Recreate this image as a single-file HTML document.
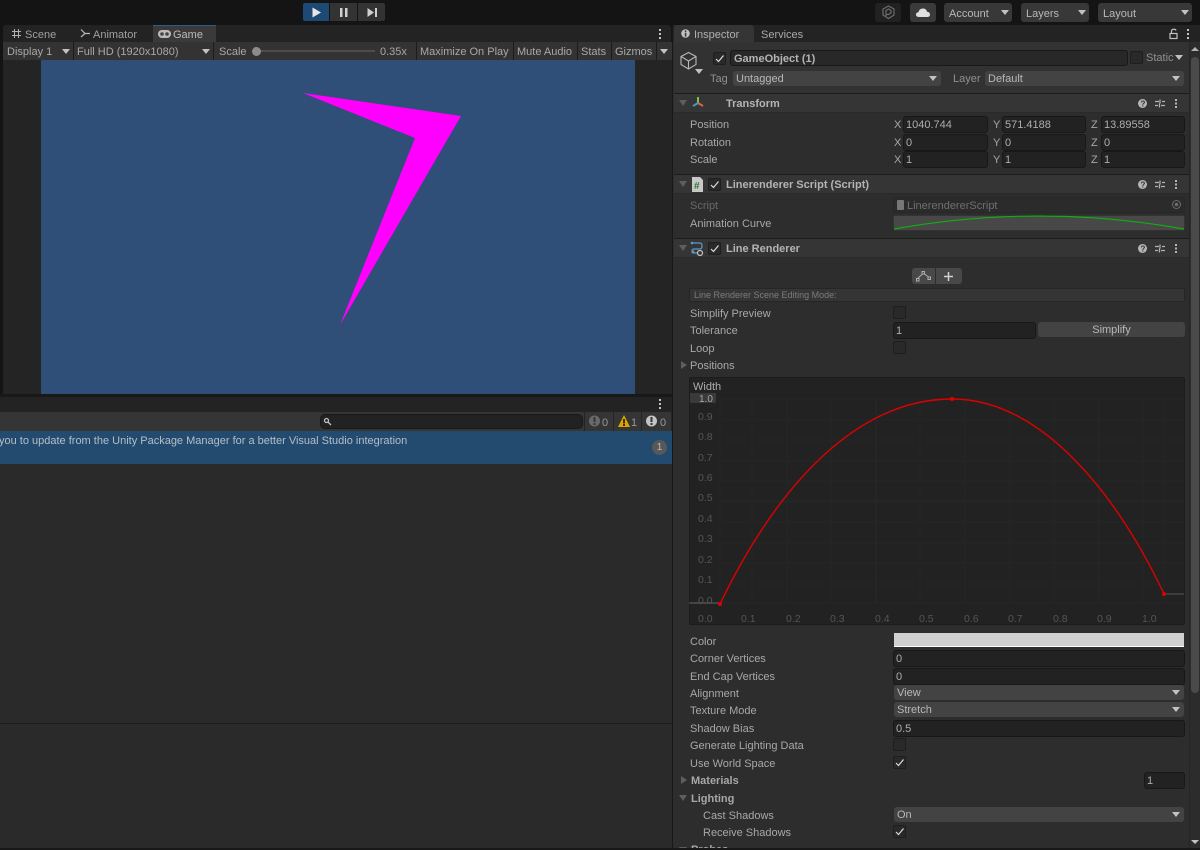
<!DOCTYPE html>
<html><head><meta charset="utf-8"><style>
html,body{margin:0;padding:0;background:#191919;}
#p{position:relative;width:1200px;height:850px;overflow:hidden;background:#141414;font:11px/14px "Liberation Sans",sans-serif;color:#a8a8a8;}
#p div,#p svg{position:absolute;}
.t{white-space:nowrap;}
.b{font-weight:bold;}
.f{background:#222;border:1px solid #181818;border-radius:3px;box-sizing:border-box;height:17px;padding-left:2px;line-height:17px;color:#aeaeae;white-space:nowrap;overflow:hidden;}
.d{background:#434343;border-radius:3px;height:15px;line-height:17px;padding-left:3px;box-sizing:border-box;color:#b8b8b8;white-space:nowrap;}
.c{width:13px;height:13px;background:#292929;border:1px solid #1e1e1e;border-radius:2px;box-sizing:border-box;}
.ar{width:0;height:0;border-left:4px solid transparent;border-right:4px solid transparent;border-top:5px solid #c2c2c2;}
.tr{width:0;height:0;border-left:4px solid transparent;border-right:4px solid transparent;border-top:6px solid #5e5e5e;}
.trr{width:0;height:0;border-top:4px solid transparent;border-bottom:4px solid transparent;border-left:6px solid #5e5e5e;}
.hd{left:674px;width:515px;height:19px;background:#353535;border-top:1px solid #1c1c1c;border-bottom:1px solid #2a2a2a;box-sizing:border-box;}
.g{color:#555;font-size:10.5px;}
.btn{background:#383838;top:3px;height:19px;border-radius:3px;}
.sep{top:42px;width:1px;height:18px;background:#1c1c1c;}
</style></head><body><div id="p">

<!-- top toolbar -->
<div style="left:303px;top:3px;width:26px;height:18px;background:#1d4a75;border-radius:2px 0 0 2px;"></div>
<div style="left:330px;top:3px;width:27px;height:18px;background:#333;"></div>
<div style="left:358px;top:3px;width:27px;height:18px;background:#333;border-radius:0 2px 2px 0;"></div>
<svg style="left:303px;top:3px" width="82" height="18"><path d="M9.500 4.500L18 9.500 9.500 14.500Z" fill="#e6e6e6"/><rect x="37" y="5" width="2.500" height="9" fill="#d0d0d0"/><rect x="42" y="5" width="2.500" height="9" fill="#d0d0d0"/><path d="M64.500 5L71 9.500 64.500 14Z" fill="#d0d0d0"/><rect x="72" y="5" width="2" height="9" fill="#d0d0d0"/></svg>
<div style="left:875px;top:3px;width:26px;height:19px;background:#212121;border-radius:3px;"></div>
<svg style="left:881px;top:5px" width="15" height="15" fill="none" stroke="#6c6c6c" stroke-width="1.200"><path d="M7.500 1L13 4V10L7.500 13.500 2 10V4ZM5 11V5.500L7.500 4 10 5.500V8L7.500 9.500H5"/></svg>
<div style="left:910px;top:3px;width:26px;height:19px;background:#3a3a3a;border-radius:3px;"></div>
<svg style="left:915px;top:6px" width="16" height="12"><path d="M4 11C1.500 11 1 9.500 1 8.500 1 7 2.200 6.200 3.500 6.300 3.800 4 5.500 2.500 8 2.500 10 2.500 11.700 3.800 12 5.700 13.800 5.800 15 7 15 8.500 15 10 14 11 12 11Z" fill="#e0e0e0"/></svg>
<div class="d btn" style="left:944px;width:68px;line-height:23px;padding-left:5px;">Account</div><div class="ar" style="left:1001px;top:10px;"></div>
<div class="d btn" style="left:1021px;width:68px;line-height:23px;padding-left:5px;">Layers</div><div class="ar" style="left:1078px;top:10px;"></div>
<div class="d btn" style="left:1098px;width:94px;line-height:23px;padding-left:5px;">Layout</div><div class="ar" style="left:1181px;top:10px;"></div>

<!-- game panel -->
<div style="left:3px;top:25px;width:668px;height:17px;background:#232323;border-radius:3px 3px 0 0;"></div>
<div style="left:153px;top:25px;width:63px;height:17px;background:#3a3a3a;border-top:1px solid #2c5d87;box-sizing:border-box;"></div>
<svg style="left:11px;top:28px" width="12" height="12" stroke="#b0b0b0" stroke-width="1"><path d="M1 3.500H10M1 7.500H10M3.500 1V10M7.500 1V10"/></svg>
<div class="t" style="left:25px;top:28px;color:#a0a0a0;">Scene</div>
<svg style="left:79px;top:28px" width="12" height="12" fill="none" stroke="#b8b8b8" stroke-width="1.200"><path d="M2 1.500L6 5.500 2 9M6 5.500H11"/></svg>
<div class="t" style="left:93px;top:28px;color:#a0a0a0;">Animator</div>
<svg style="left:158px;top:30px" width="13" height="8"><rect x="0" y="0" width="13" height="8" rx="4" fill="#bbb"/><circle cx="4" cy="4" r="1.800" fill="#444"/><circle cx="9" cy="4" r="1.800" fill="#444"/></svg>
<div class="t" style="left:173px;top:28px;color:#bcbcbc;">Game</div>
<svg style="left:658px;top:28px" width="4" height="12" fill="#c4c4c4"><rect x="1" y="1" width="2" height="2"/><rect x="1" y="5" width="2" height="2"/><rect x="1" y="9" width="2" height="2"/></svg>

<div style="left:3px;top:42px;width:670px;height:18px;background:#333;"></div>
<div class="t" style="left:7px;top:45px;">Display 1</div><div class="ar" style="left:62px;top:49px;"></div>
<div class="sep" style="left:73px"></div>
<div class="t" style="left:77px;top:45px;">Full HD (1920x1080)</div><div class="ar" style="left:202px;top:49px;"></div>
<div class="sep" style="left:213px"></div>
<div class="t" style="left:219px;top:45px;">Scale</div>
<div style="left:256px;top:50px;width:119px;height:2px;background:#4d4d4d;"></div>
<div style="left:252px;top:47px;width:9px;height:9px;border-radius:50%;background:#8c8c8c;"></div>
<div class="t" style="left:380px;top:45px;">0.35x</div>
<div class="sep" style="left:416px"></div>
<div class="t" style="left:420px;top:45px;">Maximize On Play</div>
<div class="sep" style="left:513px"></div>
<div class="t" style="left:517px;top:45px;">Mute Audio</div>
<div class="sep" style="left:577px"></div>
<div class="t" style="left:581px;top:45px;">Stats</div>
<div class="sep" style="left:611px"></div>
<div class="t" style="left:615px;top:45px;">Gizmos</div>
<div class="sep" style="left:656px"></div><div class="ar" style="left:660px;top:49px;"></div>

<div style="left:3px;top:60px;width:670px;height:334px;background:#242424;"></div>
<div style="left:41px;top:60px;width:594px;height:334px;background:#2f4e78;"></div>
<svg style="left:41px;top:60px" width="594" height="334"><path d="M262 33L420 56 299 265 374 78Z" fill="#ff00ff"/></svg>

<!-- console -->
<div style="left:0;top:394px;width:672px;height:3px;background:#181818;"></div>
<div style="left:0;top:397px;width:672px;height:15px;background:#232323;"></div>
<svg style="left:658px;top:398px" width="4" height="12" fill="#c4c4c4"><rect x="1" y="1" width="2" height="2"/><rect x="1" y="5" width="2" height="2"/><rect x="1" y="9" width="2" height="2"/></svg>
<div style="left:0;top:412px;width:672px;height:19px;background:#353535;"></div>
<div style="left:320px;top:414px;width:263px;height:15px;background:#222;border:1px solid #191919;border-radius:5px;box-sizing:border-box;"></div>
<svg style="left:323px;top:417px" width="9" height="9" fill="none" stroke="#c0c0c0" stroke-width="1.300"><circle cx="3.500" cy="3.500" r="2"/><path d="M5 5L8 8"/></svg>
<div style="left:584px;top:412px;width:1px;height:19px;background:#242424;"></div>
<div style="left:613px;top:412px;width:1px;height:19px;background:#242424;"></div>
<div style="left:641px;top:412px;width:1px;height:19px;background:#242424;"></div>
<div style="left:671px;top:412px;width:1px;height:19px;background:#242424;"></div>
<svg style="left:588px;top:414px" width="80" height="15"><circle cx="6.500" cy="7" r="5.500" fill="#6a6a6a"/><rect x="5.500" y="3" width="2" height="5" fill="#353535"/><rect x="5.500" y="9" width="2" height="2" fill="#353535"/><path d="M30 13L36 1 42 13Z" fill="#dfa400"/><rect x="35" y="5" width="2" height="4.500" fill="#3a3000"/><rect x="35" y="10" width="2" height="2" fill="#3a3000"/><circle cx="63.500" cy="7" r="5.500" fill="#c4c4c4"/><rect x="62.500" y="3" width="2" height="5" fill="#353535"/><rect x="62.500" y="9" width="2" height="2" fill="#353535"/></svg>
<div class="t" style="left:602px;top:416px;color:#999;">0</div>
<div class="t" style="left:631px;top:416px;color:#999;">1</div>
<div class="t" style="left:660px;top:416px;color:#999;">0</div>
<div style="left:0;top:431px;width:672px;height:33px;background:#234b6f;"></div>
<div class="t" style="left:-1px;top:434px;color:#b4bec7;">you to update from the Unity Package Manager for a better Visual Studio integration</div>
<div style="left:652px;top:440px;width:15px;height:15px;border-radius:50%;background:#585858;color:#bbb;text-align:center;line-height:15px;font-size:10px;">1</div>
<div style="left:0;top:464px;width:672px;height:386px;background:#2a2a2a;"></div>
<div style="left:0;top:723px;width:672px;height:1px;background:#1e1e1e;"></div>

<!-- inspector -->
<div style="left:672px;top:25px;width:1px;height:825px;background:#181818;"></div>
<div style="left:673px;top:25px;width:527px;height:17px;background:#232323;"></div>
<div style="left:674px;top:25px;width:80px;height:17px;background:#353535;border-radius:3px 3px 0 0;"></div>
<svg style="left:681px;top:29px" width="9" height="9"><circle cx="4.500" cy="4.500" r="4.300" fill="#c0c0c0"/><rect x="3.800" y="1.500" width="1.500" height="1.500" fill="#333"/><rect x="3.800" y="3.700" width="1.500" height="3.800" fill="#333"/></svg>
<div class="t" style="left:694px;top:28px;color:#b0b0b0;">Inspector</div>
<div class="t" style="left:761px;top:28px;color:#aaa;">Services</div>
<svg style="left:1168px;top:27px" width="11" height="13" fill="none" stroke="#c0c0c0" stroke-width="1.200"><rect x="2" y="6.500" width="7" height="5"/><path d="M3.500 6.500V4C3.500 2 7.500 1.500 8 3.500"/></svg>
<svg style="left:1186px;top:28px" width="4" height="12" fill="#c4c4c4"><rect x="1" y="1" width="2" height="2"/><rect x="1" y="5" width="2" height="2"/><rect x="1" y="9" width="2" height="2"/></svg>

<div style="left:673px;top:42px;width:527px;height:808px;background:#2d2d2d;"></div>
<div style="left:674px;top:42px;width:515px;height:51px;background:#323232;"></div>

<!-- scrollbar -->
<div style="left:1189px;top:42px;width:11px;height:808px;background:#2c2c2c;border-left:1px solid #262626;box-sizing:border-box;"></div>
<div style="left:1191px;top:57px;width:8px;height:636px;background:#4a4a4a;border-radius:4px;"></div>
<div class="ar" style="left:1191px;top:47px;border-top:0;border-bottom:4px solid #b0b0b0;"></div>
<div class="ar" style="left:1191px;top:840px;border-top-width:4px;"></div>

<!-- header -->
<svg style="left:679px;top:51px" width="20" height="20" fill="none" stroke="#b8b8b8" stroke-width="1.100"><path d="M9.500 1.500L17 5.500V13.500L9.500 18 2 13.500V5.500ZM2 5.500L9.500 10 17 5.500M9.500 10V18"/></svg>
<div class="ar" style="left:695px;top:69px;"></div>
<div class="c" style="left:713px;top:52px;"></div>
<svg style="left:715px;top:54px" width="10" height="9" fill="none" stroke="#dcdcdc" stroke-width="1.200"><path d="M1 5L3.500 7.500 8.500 1.500"/></svg>
<div class="f b" style="left:730px;top:50px;width:398px;height:16px;color:#b4b4b4;line-height:16px;padding-left:3px;background:#282828;">GameObject (1)</div>
<div class="c" style="left:1130px;top:51px;"></div>
<div class="t" style="left:1146px;top:51px;color:#909090;">Static</div>
<div class="ar" style="left:1175px;top:55px;"></div>
<div class="t" style="left:710px;top:72px;color:#909090;">Tag</div>
<div class="d" style="left:733px;top:71px;width:208px;">Untagged</div><div class="ar" style="left:929px;top:76px;"></div>
<div class="t" style="left:953px;top:72px;color:#909090;">Layer</div>
<div class="d" style="left:985px;top:71px;width:199px;">Default</div><div class="ar" style="left:1172px;top:76px;"></div>

<!-- Transform -->
<div class="hd" style="top:93px;height:20px;"></div>
<div class="tr" style="left:679px;top:100px;"></div>
<svg style="left:691px;top:96px" width="14" height="14" fill="none" stroke-width="2"><path d="M7 7V1" stroke="#7fc241"/><path d="M7 7L2 10" stroke="#3d9bd0"/><path d="M7 7L12 10" stroke="#d5683e"/></svg>
<div class="t b" style="left:726px;top:97px;color:#b4b4b4;">Transform</div>
<svg style="left:1137px;top:98px" width="45" height="11"><circle cx="5.500" cy="5.500" r="4.500" fill="#b4b4b4"/><text x="3.500" y="8.500" font-size="8" font-weight="bold" fill="#333" font-family="Liberation Sans">?</text><path d="M18 3.500H22M25 3.500H28M18 7.500H21M24 7.500H28M23 1.500V5.500M22.500 5.500V9.500" stroke="#b4b4b4" stroke-width="1.200" fill="none"/><rect x="38" y="1" width="2" height="2" fill="#b4b4b4"/><rect x="38" y="4.500" width="2" height="2" fill="#b4b4b4"/><rect x="38" y="8" width="2" height="2" fill="#b4b4b4"/></svg>

<div class="t" style="left:690px;top:118px;">Position</div>
<div class="t" style="left:690px;top:136px;">Rotation</div>
<div class="t" style="left:690px;top:153px;">Scale</div>
<div class="t" style="left:894px;top:118px;">X</div><div class="f" style="left:903px;top:116px;width:85px;">1040.744</div>
<div class="t" style="left:993px;top:118px;">Y</div><div class="f" style="left:1002px;top:116px;width:84px;">571.4188</div>
<div class="t" style="left:1091px;top:118px;">Z</div><div class="f" style="left:1101px;top:116px;width:84px;">13.89558</div>
<div class="t" style="left:894px;top:136px;">X</div><div class="f" style="left:903px;top:134px;width:85px;">0</div>
<div class="t" style="left:993px;top:136px;">Y</div><div class="f" style="left:1002px;top:134px;width:84px;">0</div>
<div class="t" style="left:1091px;top:136px;">Z</div><div class="f" style="left:1101px;top:134px;width:84px;">0</div>
<div class="t" style="left:894px;top:153px;">X</div><div class="f" style="left:903px;top:151px;width:85px;">1</div>
<div class="t" style="left:993px;top:153px;">Y</div><div class="f" style="left:1002px;top:151px;width:84px;">1</div>
<div class="t" style="left:1091px;top:153px;">Z</div><div class="f" style="left:1101px;top:151px;width:84px;">1</div>

<!-- Script -->
<div class="hd" style="top:174px;height:20px;"></div>
<div class="tr" style="left:679px;top:181px;"></div>
<svg style="left:691px;top:177px" width="13" height="15"><path d="M1 0H9L12 3V15H1Z" fill="#c8c8c8"/><text x="3" y="12" font-size="10" font-weight="bold" fill="#2b7a2b" font-family="Liberation Sans">#</text></svg>
<div class="c" style="left:708px;top:178px;"></div>
<svg style="left:710px;top:180px" width="10" height="9" fill="none" stroke="#dcdcdc" stroke-width="1.200"><path d="M1 5L3.500 7.500 8.500 1.500"/></svg>
<div class="t b" style="left:726px;top:178px;color:#b4b4b4;">Linerenderer Script (Script)</div>
<svg style="left:1137px;top:179px" width="45" height="11"><circle cx="5.500" cy="5.500" r="4.500" fill="#b4b4b4"/><text x="3.500" y="8.500" font-size="8" font-weight="bold" fill="#333" font-family="Liberation Sans">?</text><path d="M18 3.500H22M25 3.500H28M18 7.500H21M24 7.500H28M23 1.500V5.500M22.500 5.500V9.500" stroke="#b4b4b4" stroke-width="1.200" fill="none"/><rect x="38" y="1" width="2" height="2" fill="#b4b4b4"/><rect x="38" y="4.500" width="2" height="2" fill="#b4b4b4"/><rect x="38" y="8" width="2" height="2" fill="#b4b4b4"/></svg>
<div class="t" style="left:690px;top:199px;color:#696969;">Script</div>
<div style="left:893px;top:197px;width:292px;height:16px;background:#2b2b2b;border:1px solid #272727;border-radius:3px;box-sizing:border-box;"></div>
<div style="left:897px;top:200px;width:7px;height:10px;background:#777;border-radius:1px;"></div>
<div class="t" style="left:907px;top:199px;color:#6f6f6f;">LinerendererScript</div>
<svg style="left:1171px;top:199px" width="11" height="11" fill="none" stroke="#6c6c6c"><circle cx="5.500" cy="5.500" r="4"/><circle cx="5.500" cy="5.500" r="1.300" fill="#6c6c6c"/></svg>
<div class="t" style="left:690px;top:217px;">Animation Curve</div>
<svg style="left:893px;top:215px" width="292" height="16"><rect width="292" height="16" fill="#484848" stroke="#1e1e1e"/><path d="M1 14Q146 -12 291 14" fill="none" stroke="#10b010" stroke-width="1.200"/></svg>

<!-- Line Renderer -->
<div class="hd" style="top:238px;height:20px;"></div>
<div class="tr" style="left:679px;top:245px;"></div>
<svg style="left:690px;top:241px" width="14" height="15" fill="none" stroke-width="1.200"><path d="M2 2H10Q12 2 12 5T10 8H4Q2 8 2 10T4 12H8" stroke="#5a9bc8"/><circle cx="2" cy="2" r="1.300" fill="#5a9bc8"/><circle cx="3" cy="11" r="1.500" fill="#5a9bc8"/><circle cx="10" cy="12" r="2.500" stroke="#c0c0c0"/></svg>
<div class="c" style="left:708px;top:242px;"></div>
<svg style="left:710px;top:244px" width="10" height="9" fill="none" stroke="#dcdcdc" stroke-width="1.200"><path d="M1 5L3.500 7.500 8.500 1.500"/></svg>
<div class="t b" style="left:726px;top:242px;color:#b4b4b4;">Line Renderer</div>
<svg style="left:1137px;top:243px" width="45" height="11"><circle cx="5.500" cy="5.500" r="4.500" fill="#b4b4b4"/><text x="3.500" y="8.500" font-size="8" font-weight="bold" fill="#333" font-family="Liberation Sans">?</text><path d="M18 3.500H22M25 3.500H28M18 7.500H21M24 7.500H28M23 1.500V5.500M22.500 5.500V9.500" stroke="#b4b4b4" stroke-width="1.200" fill="none"/><rect x="38" y="1" width="2" height="2" fill="#b4b4b4"/><rect x="38" y="4.500" width="2" height="2" fill="#b4b4b4"/><rect x="38" y="8" width="2" height="2" fill="#b4b4b4"/></svg>

<div style="left:912px;top:268px;width:23px;height:16px;background:#484848;border-radius:3px 0 0 3px;"></div>
<div style="left:936px;top:268px;width:26px;height:16px;background:#484848;border-radius:0 3px 3px 0;"></div>
<svg style="left:915px;top:270px" width="18" height="13" fill="none" stroke="#b0b0b0"><rect x="1.500" y="8.500" width="2.500" height="2.500"/><rect x="7" y="1.500" width="2.500" height="2.500"/><rect x="13" y="7" width="2.500" height="2.500"/><path d="M3 8L7.500 4M9.500 4L13.500 7"/></svg>
<svg style="left:943px;top:271px" width="11" height="11" stroke="#d0d0d0" stroke-width="1.500"><path d="M1 5.500H10M5.500 1V10"/></svg>

<div style="left:689px;top:288px;width:496px;height:14px;background:#353535;border:1px solid #262626;border-radius:2px;box-sizing:border-box;"></div>
<div class="t" style="left:694px;top:288px;font-size:9px;color:#7c7c7c;">Line Renderer Scene Editing Mode:</div>

<div class="t" style="left:690px;top:307px;">Simplify Preview</div><div class="c" style="left:893px;top:306px;"></div>
<div class="t" style="left:690px;top:324px;">Tolerance</div>
<div class="f" style="left:893px;top:322px;width:143px;">1</div>
<div class="d" style="left:1038px;top:322px;width:147px;text-align:center;padding:0;">Simplify</div>
<div class="t" style="left:690px;top:342px;">Loop</div><div class="c" style="left:893px;top:341px;"></div>
<div class="trr" style="left:681px;top:361px;"></div>
<div class="t" style="left:690px;top:359px;">Positions</div>

<!-- curve -->
<div style="left:689px;top:377px;width:496px;height:248px;background:#222;border:1px solid #1c1c1c;border-radius:2px;box-sizing:border-box;"></div>
<div class="t" style="left:693px;top:380px;color:#aeaeae;">Width</div>
<div style="left:690px;top:393px;width:26px;height:10px;background:#3a3a3a;"></div>
<svg style="left:689px;top:377px" width="496" height="248"><g stroke="#252525" stroke-width="1" fill="none"><path d="M31 22V226M63 22V226M98 22V226M142 22V226M187 22V226M231 22V226M276 22V226M321 22V226M365 22V226M410 22V226M454 22V226M475 22V226"/><path d="M31 22H495M31 43H495M31 63H495M31 84H495M31 104H495M31 125H495M31 145H495M31 166H495M31 186H495M31 207H495M31 226H495"/><path d="M187 22V226M410 22V226M31 124H495" stroke="#282828"/></g>
<path d="M0 226H31" stroke="#666" stroke-width="1"/><path d="M475 217H495" stroke="#555" stroke-width="1"/>
<path d="M31 227C91 103 171 22 263 22S431 123 475 217" fill="none" stroke="#dc0000" stroke-width="1.400"/>
<circle cx="31" cy="227" r="2" fill="#e00000"/><circle cx="263" cy="22" r="2" fill="#e00000"/><circle cx="475" cy="217" r="2" fill="#e00000"/></svg>
<div class="t" style="left:699px;top:393px;font-size:10px;color:#a8a8a8;">1.0</div>
<div class="t g" style="left:698px;top:410px;">0.9</div>
<div class="t g" style="left:698px;top:430px;">0.8</div>
<div class="t g" style="left:698px;top:451px;">0.7</div>
<div class="t g" style="left:698px;top:471px;">0.6</div>
<div class="t g" style="left:698px;top:491px;">0.5</div>
<div class="t g" style="left:698px;top:512px;">0.4</div>
<div class="t g" style="left:698px;top:532px;">0.3</div>
<div class="t g" style="left:698px;top:553px;">0.2</div>
<div class="t g" style="left:698px;top:573px;">0.1</div>
<div class="t g" style="left:698px;top:594px;">0.0</div>
<div class="t g" style="left:698px;top:612px;">0.0</div>
<div class="t g" style="left:741px;top:612px;">0.1</div>
<div class="t g" style="left:786px;top:612px;">0.2</div>
<div class="t g" style="left:830px;top:612px;">0.3</div>
<div class="t g" style="left:875px;top:612px;">0.4</div>
<div class="t g" style="left:919px;top:612px;">0.5</div>
<div class="t g" style="left:964px;top:612px;">0.6</div>
<div class="t g" style="left:1008px;top:612px;">0.7</div>
<div class="t g" style="left:1053px;top:612px;">0.8</div>
<div class="t g" style="left:1097px;top:612px;">0.9</div>
<div class="t g" style="left:1142px;top:612px;">1.0</div>

<!-- fields -->
<div class="t" style="left:690px;top:635px;">Color</div>
<div style="left:894px;top:633px;width:290px;height:14px;background:#d0d0d0;border-bottom:1px solid #fff;box-sizing:border-box;"></div>
<div class="t" style="left:690px;top:652px;">Corner Vertices</div>
<div class="f" style="left:893px;top:650px;width:292px;">0</div>
<div class="t" style="left:690px;top:670px;">End Cap Vertices</div>
<div class="f" style="left:893px;top:668px;width:292px;">0</div>
<div class="t" style="left:690px;top:687px;">Alignment</div>
<div class="d" style="left:894px;top:685px;width:290px;">View</div><div class="ar" style="left:1172px;top:690px;"></div>
<div class="t" style="left:690px;top:704px;">Texture Mode</div>
<div class="d" style="left:894px;top:702px;width:290px;">Stretch</div><div class="ar" style="left:1172px;top:707px;"></div>
<div class="t" style="left:690px;top:722px;">Shadow Bias</div>
<div class="f" style="left:893px;top:720px;width:292px;">0.5</div>
<div class="t" style="left:690px;top:739px;">Generate Lighting Data</div><div class="c" style="left:893px;top:738px;"></div>
<div class="t" style="left:690px;top:757px;">Use World Space</div><div class="c" style="left:893px;top:756px;"></div>
<svg style="left:895px;top:758px" width="10" height="9" fill="none" stroke="#dcdcdc" stroke-width="1.200"><path d="M1 5L3.500 7.500 8.500 1.500"/></svg>
<div class="trr" style="left:681px;top:776px;"></div>
<div class="t b" style="left:691px;top:774px;">Materials</div>
<div class="f" style="left:1144px;top:772px;width:41px;">1</div>
<div class="tr" style="left:679px;top:795px;"></div>
<div class="t b" style="left:691px;top:792px;">Lighting</div>
<div class="t" style="left:703px;top:809px;">Cast Shadows</div>
<div class="d" style="left:894px;top:807px;width:290px;">On</div><div class="ar" style="left:1172px;top:812px;"></div>
<div class="t" style="left:703px;top:826px;">Receive Shadows</div><div class="c" style="left:893px;top:825px;"></div>
<svg style="left:895px;top:827px" width="10" height="9" fill="none" stroke="#dcdcdc" stroke-width="1.200"><path d="M1 5L3.500 7.500 8.500 1.500"/></svg>
<div class="tr" style="left:679px;top:847px;"></div>
<div class="t b" style="left:691px;top:843px;">Probes</div>
<div style="left:0;top:848px;width:1200px;height:2px;background:#181818;"></div>
</div></body></html>
